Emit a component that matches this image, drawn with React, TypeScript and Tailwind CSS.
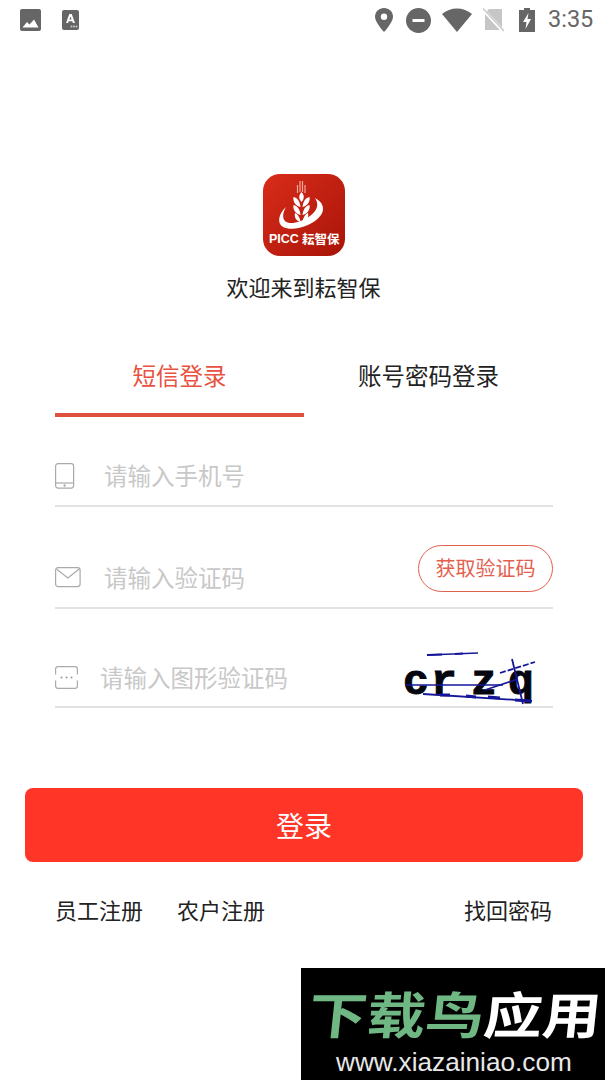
import React from "react";

const CJK = { fontFamily: '"Noto Sans CJK SC", "Liberation Sans", sans-serif' };

function StatusBar() {
  return (
    <div className="h-[40px] flex items-center justify-between pl-[20px] pr-[14px] text-[#666666]">
      <div className="flex items-center gap-[21px]">
        <svg width="21" height="22" viewBox="0 0 21 22">
          <rect x="0" y="0" width="21" height="22" rx="2" fill="#666666" />
          <path d="M2.5 18.5 L7 13 L9.5 15.5 L14 10.5 L18.5 18.5 Z" fill="#fff" />
        </svg>
        <svg width="17" height="20" viewBox="0 0 17 20">
          <rect x="0" y="0" width="17" height="20" rx="2" fill="#666666" />
          <path d="M4 13 L7.3 4 H9.7 L13 13 H10.9 L10.3 11.2 H6.7 L6.1 13 Z M7.4 9.4 H9.6 L8.5 6.5 Z" fill="#fff" fillRule="evenodd" />
          <circle cx="9.5" cy="16.5" r="1" fill="#ccc" />
          <circle cx="12" cy="16.5" r="1" fill="#ccc" />
          <circle cx="14.5" cy="16.5" r="1" fill="#ccc" />
        </svg>
      </div>
      <div className="flex items-center">
        <svg width="18" height="24" viewBox="0 0 18 24" className="mr-[13px]">
          <path d="M9 0 C4 0 0 3.9 0 8.8 C0 14.5 9 24 9 24 C9 24 18 14.5 18 8.8 C18 3.9 14 0 9 0 Z" fill="#666666" />
          <circle cx="9" cy="8.8" r="3.2" fill="#fff" />
        </svg>
        <svg width="25" height="25" viewBox="0 0 25 25" className="mr-[11px]">
          <circle cx="12.5" cy="12.5" r="12.5" fill="#666666" />
          <rect x="6.5" y="11" width="12" height="3" fill="#fff" />
        </svg>
        <svg width="30" height="24" viewBox="0 0 30 24" className="mr-[11px]">
          <path d="M0 6 C8 -1.5 22 -1.5 30 6 L15 24 Z" fill="#666666" />
        </svg>
        <svg width="21" height="24" viewBox="0 0 21 24" className="mr-[15px]">
          <path d="M6 1 H19 V22 H2 V5 Z" fill="#c6c6c6" />
          <path d="M0 1.5 L21 24" stroke="#fff" strokeWidth="3.4" />
          <path d="M0 0.5 L21 23" stroke="#c6c6c6" strokeWidth="1.3" />
        </svg>
        <svg width="16" height="24" viewBox="0 0 16 24" className="mr-[13px]">
          <path d="M5 0 H11 V2 H16 V24 H0 V2 H5 Z" fill="#666666" />
          <path d="M9.5 5 L4 14 H7.5 L6.5 21 L12 11 H8.5 Z" fill="#fff" />
        </svg>
        <span className="text-[23.5px] leading-none text-[#666666] w-[46px] whitespace-nowrap" style={{ fontFamily: "Roboto, sans-serif" }}>3:35</span>
      </div>
    </div>
  );
}

function Logo() {
  return (
    <div className="relative w-[82px] h-[82px] rounded-[17px] overflow-hidden bg-gradient-to-br from-[#d92c1a] to-[#a81408]">
      <svg width="82" height="82" viewBox="0 0 82 82" className="absolute left-0 top-0">
        <g stroke="#f2a99a" strokeWidth="1.2">
          <path d="M34.5 11 V19 M37 7 V18 M39.5 7 V18 M42 11 V19" />
        </g>
        <g fill="#fff">
          <path d="M38.5 18 C35.5 21 35.5 25 38.5 28 C41.5 25 41.5 21 38.5 18 Z" />
          <path d="M37.5 33 C37 28 35 24 30.5 23 C29.5 28 33 32 37.5 33 Z" />
          <path d="M39.5 33 C40 28 42 24 46.5 23 C47.5 28 44 32 39.5 33 Z" />
          <path d="M37.5 41 C37 36 35 32 30.5 31 C29.5 36 33 40 37.5 41 Z" />
          <path d="M39.5 41 C40 36 42 32 46.5 31 C47.5 36 44 40 39.5 41 Z" />
          <path d="M37.5 48 C37 44 35 40 32 39 C31 43 33 47 37.5 48 Z" />
          <path d="M39.5 48 C40 44 42 40 45 39 C46 43 44 47 39.5 48 Z" />
          <path d="M23 33 C15 40 14 50 20 53 C30 58 50 52 58 41 C62 35 60 28 52 24 C56 30 55 36 47 42 C37 49 26 51 22 47 C19 44 20 38 23 33 Z" />
        </g>
      </svg>
      <div className="absolute left-[6px] top-[57px] flex whitespace-nowrap text-white font-bold text-[12.5px] leading-[16px]" style={CJK}>
        <span className="mr-[3px]" style={{ fontFamily: '"Liberation Sans", sans-serif' }}>PICC</span>
        <span>耘智保</span>
      </div>
    </div>
  );
}

function PhoneIcon() {
  return (
    <svg width="20" height="26" viewBox="0 0 20 26" fill="none" stroke="#aaaaaa" strokeWidth="1.2">
      <rect x="0.6" y="0.6" width="18" height="24.5" rx="2.5" />
      <path d="M0.6 20 H18.6" />
      <circle cx="9.6" cy="22.5" r="0.6" fill="#888888" />
    </svg>
  );
}

function MailIcon() {
  return (
    <svg width="26" height="21" viewBox="0 0 26 21" fill="none" stroke="#aaaaaa" strokeWidth="1.2">
      <rect x="0.6" y="0.6" width="24.5" height="19" rx="2.5" />
      <path d="M1.5 2 L12.8 11 L24.2 2" />
    </svg>
  );
}

function DotsIcon() {
  return (
    <svg width="23" height="23" viewBox="0 0 23 23" fill="none" stroke="#aaaaaa" strokeWidth="1.2">
      <path d="M0.6 8.5 V3 Q0.6 0.6 3 0.6 H20 Q22.4 0.6 22.4 3 V8.5" />
      <path d="M0.6 14.5 V20 Q0.6 22.4 3 22.4 H20 Q22.4 22.4 22.4 20 V14.5" />
      <g fill="#999999" stroke="none">
        <circle cx="6.5" cy="11.5" r="1" />
        <circle cx="11.5" cy="11.5" r="1" />
        <circle cx="16.5" cy="11.5" r="1" />
      </g>
    </svg>
  );
}

function Captcha() {
  return (
    <div className="relative w-[153px] h-[62px] shrink-0">
      <div
        className="absolute left-[3px] top-[13px] flex text-[43px] leading-[48px] font-bold text-[#05050f] [-webkit-text-stroke:1px_#05050f]"
        style={{ fontFamily: '"Liberation Mono", monospace' }}
      >
        <span className="w-[28px]">c</span>
        <span className="w-[40px]">r</span>
        <span className="w-[37px]">z</span>
        <span>q</span>
      </div>
      <svg width="153" height="62" viewBox="0 0 153 62" className="absolute left-0 top-0">
        <g stroke="#16169a" fill="none">
          <path d="M27 9 L78 7" strokeWidth="1.4" />
          <path d="M27 9 L42 8.5 M55 8 L63 7.5" strokeWidth="2.2" />
          <path d="M100 27 L135 16" strokeWidth="1.8" strokeDasharray="6 2" />
          <path d="M112 13 L123 58" strokeWidth="1.8" />
          <path d="M5 39 L103 39" strokeWidth="1.4" />
          <path d="M23 48 L132 55" strokeWidth="1.8" />
          <path d="M40 49 L50 49 M66 50 L76 51 M88 51 L100 52 M115 54 L130 55" strokeWidth="2.8" />
          <path d="M85 44 L118 33" strokeWidth="1.6" />
        </g>
      </svg>
    </div>
  );
}

function Watermark() {
  return (
    <div className="absolute left-[301px] top-[968px] w-[304px] h-[112px] bg-black overflow-hidden">
      <div
        className="absolute left-[8px] top-[13px] whitespace-nowrap text-[50px] leading-[62px] font-bold origin-left"
        style={{ ...CJK, transform: "skewX(-6deg) scaleX(1.17)" }}
      >
        <span className="text-[#6fb884]">下载鸟</span>
        <span className="text-white">应用</span>
      </div>
      <div className="absolute left-[35px] top-[79px] text-[26.2px] leading-[30px] text-[#e8e8e8] whitespace-nowrap" style={{ fontFamily: '"Liberation Sans", sans-serif' }}>
        www.xiazainiao.com
      </div>
    </div>
  );
}

export default function App() {
  return (
    <div className="relative w-[608px] h-[1080px] bg-white overflow-hidden" style={CJK}>
      <StatusBar />

      <div className="flex flex-col items-center pt-[134px]">
        <Logo />
        <div className="mt-[14px] text-[22px] leading-[32px] text-[#222222] pr-[1px]">欢迎来到耘智保</div>
      </div>

      <div className="ml-[55px] w-[498px] mt-[41px]">
        <div className="flex h-[74px]">
          <div className="w-[249px] border-b-[4px] border-[#e0503f] text-[23.5px] leading-[36px] pt-[14px] text-[#e85240] text-center">短信登录</div>
          <div className="w-[249px] text-[23.5px] leading-[36px] pt-[14px] text-[#222222] text-center">账号密码登录</div>
        </div>

        <div className="flex items-center h-[90px] border-b-2 border-[#e2e2e2] pt-[28px]">
          <div className="w-[49px] pt-[2px]"><PhoneIcon /></div>
          <div className="text-[23.5px] leading-[36px] text-[#c8c8c8]">请输入手机号</div>
        </div>

        <div className="flex items-center h-[102px] border-b-2 border-[#e2e2e2] pt-[40px]">
          <div className="w-[49px] pt-[1px]"><MailIcon /></div>
          <div className="text-[23.5px] leading-[36px] text-[#c8c8c8]">请输入验证码</div>
          <div className="ml-auto -mt-[18px] w-[135px] h-[47px] rounded-full border-[1.5px] border-[#e4604e] flex items-center justify-center text-[20px] text-[#e4604e] leading-none">获取验证码</div>
        </div>

        <div className="flex items-center h-[99px] border-b-2 border-[#e2e2e2] pt-[38px]">
          <div className="w-[45px] pt-[1px]"><DotsIcon /></div>
          <div className="text-[23.5px] leading-[36px] text-[#c8c8c8]">请输入图形验证码</div>
          <div className="ml-auto"><Captcha /></div>
        </div>
      </div>

      <div className="ml-[25px] w-[558px] h-[74px] mt-[80px] rounded-[8px] bg-[#ff3528] flex items-center justify-center text-white text-[28px] leading-none">登录</div>

      <div className="ml-[55px] w-[497px] mt-[31px] flex text-[22px] leading-[32px] text-[#222222]">
        <span className="mr-[34px]">员工注册</span>
        <span>农户注册</span>
        <span className="ml-auto">找回密码</span>
      </div>

      <Watermark />
    </div>
  );
}
